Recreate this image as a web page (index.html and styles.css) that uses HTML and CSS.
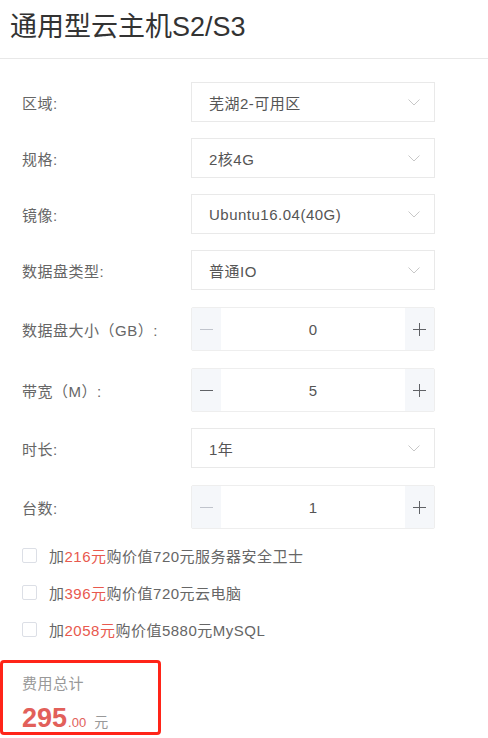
FILE: index.html
```html
<!DOCTYPE html>
<html lang="zh">
<head>
<meta charset="utf-8">
<link rel="stylesheet" href="styles.css">
</head>
<body>
<header class="header"><h1 class="title">通用型云主机S2/S3</h1></header>
<main class="form">
  <div class="row">
    <span class="label">区域:</span>
    <div class="select"><span>芜湖2-可用区</span><svg class="chev" viewBox="0 0 12 7"><path d="M0.5 0.5 L6 6 L11.5 0.5" fill="none" stroke="#c8c8c8" stroke-width="1"/></svg></div>
  </div>
  <div class="row">
    <span class="label">规格:</span>
    <div class="select"><span>2核4G</span><svg class="chev" viewBox="0 0 12 7"><path d="M0.5 0.5 L6 6 L11.5 0.5" fill="none" stroke="#c8c8c8" stroke-width="1"/></svg></div>
  </div>
  <div class="row">
    <span class="label">镜像:</span>
    <div class="select"><span>Ubuntu16.04(40G)</span><svg class="chev" viewBox="0 0 12 7"><path d="M0.5 0.5 L6 6 L11.5 0.5" fill="none" stroke="#c8c8c8" stroke-width="1"/></svg></div>
  </div>
  <div class="row">
    <span class="label">数据盘类型:</span>
    <div class="select"><span>普通IO</span><svg class="chev" viewBox="0 0 12 7"><path d="M0.5 0.5 L6 6 L11.5 0.5" fill="none" stroke="#c8c8c8" stroke-width="1"/></svg></div>
  </div>
  <div class="row row-step">
    <span class="label">数据盘大小（GB）:</span>
    <div class="stepper">
      <span class="btn"><svg viewBox="0 0 13 13"><path d="M0 6.5 H13" stroke="#c0c4cc" stroke-width="1"/></svg></span>
      <span class="num">0</span>
      <span class="btn"><svg viewBox="0 0 13 13"><path d="M0 6.5 H13 M6.5 0 V13" stroke="#606266" stroke-width="1"/></svg></span>
    </div>
  </div>
  <div class="row row-step">
    <span class="label">带宽（M）:</span>
    <div class="stepper">
      <span class="btn"><svg viewBox="0 0 13 13"><path d="M0 6.5 H13" stroke="#606266" stroke-width="1"/></svg></span>
      <span class="num">5</span>
      <span class="btn"><svg viewBox="0 0 13 13"><path d="M0 6.5 H13 M6.5 0 V13" stroke="#606266" stroke-width="1"/></svg></span>
    </div>
  </div>
  <div class="row">
    <span class="label">时长:</span>
    <div class="select"><span>1年</span><svg class="chev" viewBox="0 0 12 7"><path d="M0.5 0.5 L6 6 L11.5 0.5" fill="none" stroke="#c8c8c8" stroke-width="1"/></svg></div>
  </div>
  <div class="row row-step">
    <span class="label">台数:</span>
    <div class="stepper">
      <span class="btn"><svg viewBox="0 0 13 13"><path d="M0 6.5 H13" stroke="#c0c4cc" stroke-width="1"/></svg></span>
      <span class="num">1</span>
      <span class="btn"><svg viewBox="0 0 13 13"><path d="M0 6.5 H13 M6.5 0 V13" stroke="#606266" stroke-width="1"/></svg></span>
    </div>
  </div>
</main>
<ul class="extras">
  <li class="extra"><span class="box"></span><span>加<em>216元</em>购价值720元服务器安全卫士</span></li>
  <li class="extra"><span class="box"></span><span>加<em>396元</em>购价值720元云电脑</span></li>
  <li class="extra"><span class="box"></span><span>加<em>2058元</em>购价值5880元MySQL</span></li>
</ul>
<section class="total">
  <div class="total-label">费用总计</div>
  <div class="amount"><span class="int">295</span><span class="dec">.00</span><span class="unit">元</span></div>
</section>
</body>
</html>
```
FILE: styles.css
```css
* { box-sizing: border-box; }
body {
  margin: 0;
  width: 488px;
  height: 738px;
  overflow: hidden;
  background: #fff;
  font-family: "Liberation Sans", Arial, "Noto Sans CJK SC", sans-serif;
  color: #666;
}
.header {
  height: 59px;
  border-bottom: 1px solid #e8e8e8;
  padding: 0 10px;
  display: flex;
  align-items: center;
}
.title {
  margin: 0 0 10px;
  font-size: 27px;
  font-weight: normal;
  color: #333;
}
.form {
  padding: 23px 0 0 22px;
  display: flex;
  flex-direction: column;
  gap: 16px;
}
.row {
  display: flex;
  align-items: center;
}
.row-step { padding-top: 1px; }
.label {
  width: 169px;
  font-size: 15px;
  letter-spacing: 0.5px;
  color: #666;
}
.select {
  width: 244px;
  height: 40px;
  border: 1px solid #e9e9e9;
  display: flex;
  align-items: center;
  justify-content: space-between;
  padding: 0 14px 0 17px;
  font-size: 15px;
  letter-spacing: 0.5px;
  color: #555;
}
.chev { width: 12px; height: 7px; }
.stepper {
  width: 244px;
  height: 44px;
  border: 1px solid #eeeeee;
  border-radius: 2px;
  display: flex;
  align-items: stretch;
}
.btn {
  width: 29px;
  background: #f5f7fa;
  display: flex;
  align-items: center;
  justify-content: center;
}
.btn svg { width: 13px; height: 13px; }
.num {
  flex: 1;
  display: flex;
  align-items: center;
  justify-content: center;
  font-size: 15px;
  color: #555;
}
.extras {
  list-style: none;
  margin: 0;
  padding: 16px 0 0 22px;
  display: flex;
  flex-direction: column;
  gap: 17px;
}
.extra {
  height: 20px;
  display: flex;
  align-items: center;
  font-size: 15px;
  letter-spacing: 0.5px;
  color: #666;
}
.box {
  width: 15px;
  height: 15px;
  border: 1px solid #dcdfe6;
  border-radius: 2px;
  margin-right: 12px;
}
.extra em { font-style: normal; color: #e8594e; }
.total {
  margin-top: 21px;
  width: 161px;
  height: 75px;
  border: 3px solid #ff2418;
  border-radius: 4px;
  padding: 11px 0 0 19px;
}
.total-label {
  font-size: 15px;
  letter-spacing: 0.5px;
  color: #999;
  line-height: 20px;
}
.amount {
  margin-top: 12px;
  display: flex;
  align-items: baseline;
  line-height: 24px;
}
.int {
  font-size: 27px;
  font-weight: bold;
  color: #e2605a;
  margin-right: 1px;
}
.dec {
  font-size: 13px;
  color: #e2605a;
  margin-right: 8px;
}
.unit {
  font-size: 14px;
  color: #999;
}
```
